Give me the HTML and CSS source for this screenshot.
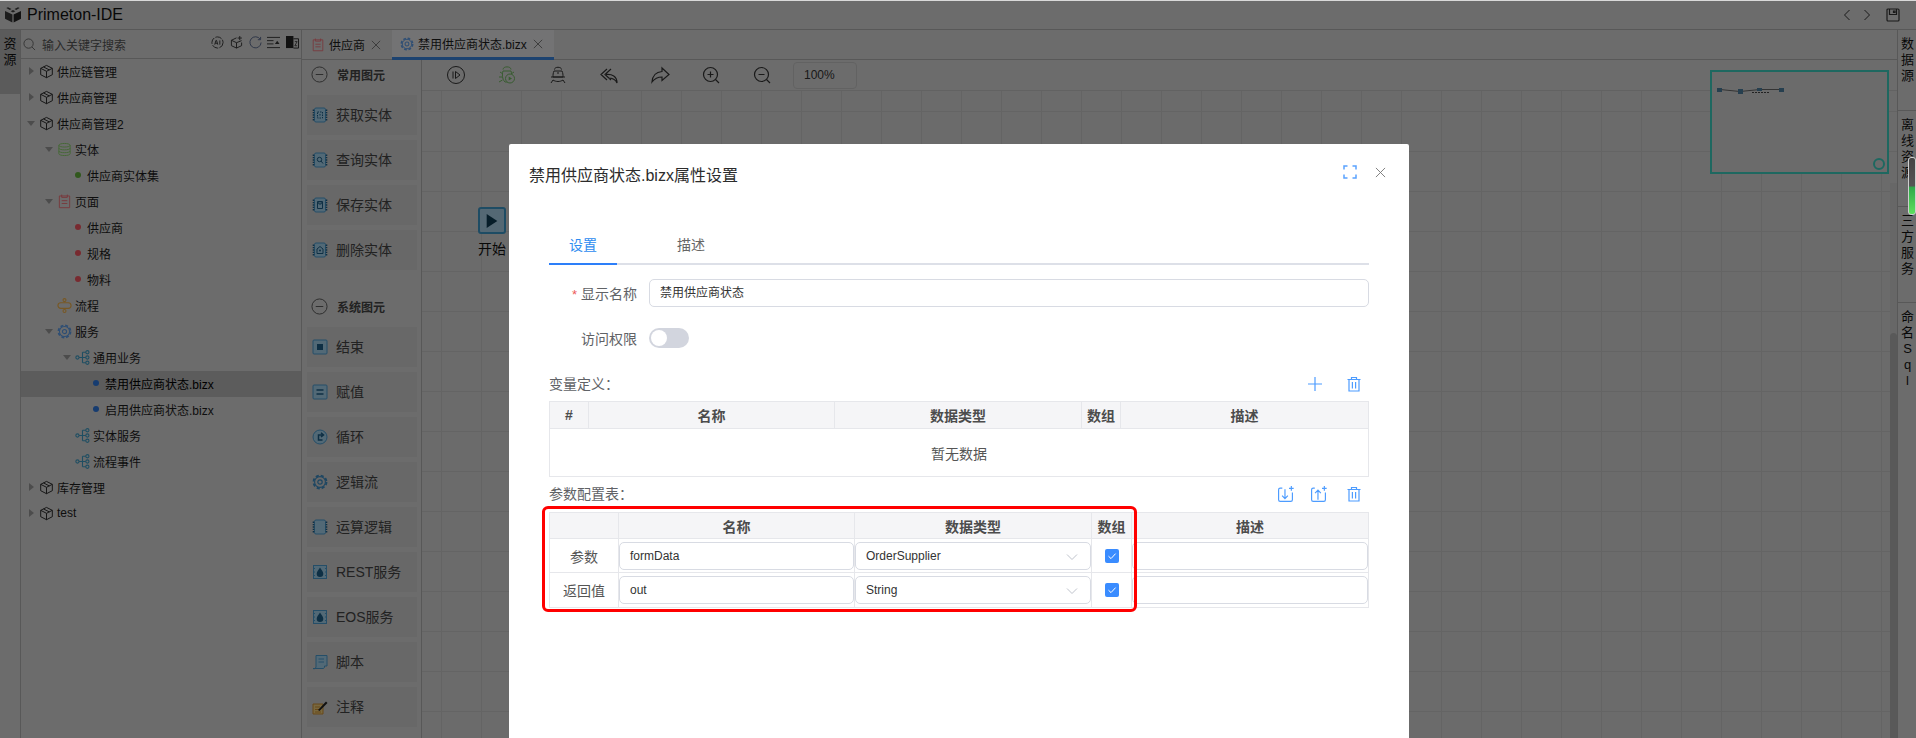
FILE: index.html
```html
<!DOCTYPE html>
<html lang="zh">
<head>
<meta charset="utf-8">
<title>Primeton-IDE</title>
<link rel="stylesheet" href="styles.css">
</head>
<body>
<svg class="sprite" xmlns="http://www.w3.org/2000/svg">
  <symbol id="cube" viewBox="0 0 16 16"><path d="M8 1.5 14.2 4.6V11.4L8 14.6 1.8 11.4V4.6ZM1.8 4.6 8 7.8 14.2 4.6M8 7.8V14.6M4.8 3.1 11 6.3" fill="none" stroke="currentColor"/></symbol>
  <symbol id="flow" viewBox="0 0 16 16"><g fill="none" stroke="currentColor" stroke-width="1.2"><circle cx="2.6" cy="8" r="1.7"/><circle cx="13.2" cy="2.4" r="1.7"/><circle cx="13.2" cy="8" r="1.7"/><circle cx="13.2" cy="13.6" r="1.7"/><path d="M4.3 8H11.5M8 2.4H11.5M8 13.6H11.5M8 2.4V13.6"/></g></symbol>
  <symbol id="gear" viewBox="0 0 16 16"><g fill="none" stroke="currentColor"><circle cx="8" cy="8" r="5.4" stroke-width="1.1"/><circle cx="8" cy="8" r="6.5" stroke-width="1.8" stroke-dasharray="3.1 2"/><circle cx="8" cy="8" r="2.2" stroke-width="1.2"/></g></symbol>
  <symbol id="page" viewBox="0 0 16 16"><path d="M2.5 2.5H13.5V15H2.5ZM5 1V4H11V1M5 7.5H11M5 10.5H11" transform="translate(0 -.4)" fill="none" stroke="currentColor"/></symbol>
  <symbol id="chip" viewBox="0 0 16 16"><rect x="2.5" y="1" width="11" height="14" rx="1.5" fill="#a5d2ec" stroke="#4a9cd0"/><path d="M1.500 2.500V13.500M14.500 2.500V13.500" stroke="#1d5f88" stroke-width="1.600" stroke-dasharray="1.400 1"/></symbol>
  <symbol id="trash" viewBox="0 0 16 16"><path d="M1.500 3.500H14.500M5.500 3.200V1.500H10.500V3.200M3 3.500V15H13V3.500M6.400 6V12.500M9.600 6V12.500" fill="none" stroke="currentColor" stroke-width="1.200"/></symbol>
  <symbol id="cross" viewBox="0 0 12 12"><path d="M1 1 11 11M11 1 1 11" fill="none" stroke="currentColor"/></symbol>
  <symbol id="chevron" viewBox="0 0 12 8"><path d="M1 1.500 6 6.500 11 1.500" fill="none" stroke="currentColor"/></symbol>
  <symbol id="tick" viewBox="0 0 14 14"><path d="M3.500 7.200 6 9.600 10.600 4.600" fill="none" stroke="#fff"/></symbol>
  <symbol id="drop" viewBox="0 0 16 16"><rect x="1.500" y="1.500" width="13" height="13" fill="#a5d2ec" stroke="#4a9cd0"/><path d="M1.500 4.500H3M1.500 8H3M1.500 11.500H3M13 4.500H14.500M13 8H14.500M13 11.500H14.500" stroke="#4a9cd0"/><path d="M8 3.500C9.500 6 11.300 7.600 11.300 9.700A3.300 3.300 0 0 1 4.700 9.700C4.700 7.600 6.500 6 8 3.500Z" fill="#1d5f88"/></symbol>
</svg>

<div class="app">
  <header class="titlebar">
    <svg class="logo" viewBox="0 0 18 17"><path d="M1 5 8.400 8.600V16.500L1 12.800Z" fill="#3a3a3a"/><path d="M17 5 9.600 8.600V16.500L17 12.800Z" fill="#262626"/><path d="M4 1.200 7.500 3 5.800 3.900 2.300 2.100ZM14 1.200 10.500 3 12.200 3.900 15.700 2.100ZM9 4 11.400 5.200 9 6.400 6.600 5.200Z" fill="#3f3f3f"/></svg>
    <span class="app-name">Primeton-IDE</span>
    <div class="title-actions">
      <svg class="nav-icon" viewBox="0 0 8 12"><path d="M6.500 1 1.500 6 6.500 11" fill="none" stroke="currentColor"/></svg>
      <svg class="nav-icon" viewBox="0 0 8 12"><path d="M1.500 1 6.500 6 1.500 11" fill="none" stroke="currentColor"/></svg>
      <svg class="save-icon" viewBox="0 0 14 14"><path d="M1 2A1 1 0 0 1 2 1H12A1 1 0 0 1 13 2V12A1 1 0 0 1 12 13H2A1 1 0 0 1 1 12ZM3.500 1V6.500H10.500V1M7.500 3H9V4.500H7.500Z" fill="none" stroke="currentColor" stroke-width="1.200"/></svg>
    </div>
  </header>

  <div class="main">
    <nav class="rail-left"><div class="rail-tab">资<br>源</div></nav>

    <aside class="tree-panel">
      <div class="search-row">
        <svg class="search-icon" viewBox="0 0 14 14"><circle cx="6" cy="6" r="5" fill="none" stroke="currentColor"/><path d="M9.700 9.700 13 13" stroke="currentColor"/></svg>
        <span class="search-text">输入关键字搜索</span>
        <div class="search-tools">
          <svg class="tool" viewBox="0 0 14 14"><circle cx="7" cy="7" r="6" fill="none" stroke="currentColor" stroke-dasharray="7 1.400"/><path d="M4 9.300 5.300 4.800H6L7.300 9.300M4.500 7.800H6.800M9.500 4.800V9.300" fill="none" stroke="currentColor"/></svg>
          <svg class="tool" viewBox="0 0 14 14"><path d="M7 2 1.500 4.600V10.400L7 13 12.500 10.400V7M1.500 4.600 7 7.200 12.500 5M7 7.200V13M10.500 0V4.500M8.200 2.200H12.800" fill="none" stroke="currentColor"/></svg>
          <svg class="tool tool-refresh" viewBox="0 0 14 14"><path d="M12 3.500A6 6 0 1 0 13 7M12.500 1V4H9.500" fill="none" stroke="currentColor"/></svg>
          <svg class="tool" viewBox="0 0 14 14"><path d="M0 1.500H14M0 5H7M0 8.500H7M0 12.500H14" stroke="currentColor"/><path d="M8.500 8.500 11 5 13.500 8.500Z" fill="currentColor"/></svg>
          <svg class="tool" viewBox="0 0 14 14"><path d="M0 0H8V13H0Z" fill="#222"/><path d="M8 3H13.500V13H8" fill="none" stroke="#222"/><path d="M9.500 6H12L9.500 10.500H12" fill="none" stroke="#222" stroke-width=".8"/></svg>
        </div>
      </div>
      <ul class="tree">
        <li class="row l0"><span class="caret closed"></span><svg class="ico ico-dark"><use href="#cube"/></svg><span>供应链管理</span></li>
        <li class="row l0"><span class="caret closed"></span><svg class="ico ico-dark"><use href="#cube"/></svg><span>供应商管理</span></li>
        <li class="row l0"><span class="caret open"></span><svg class="ico ico-dark"><use href="#cube"/></svg><span>供应商管理2</span></li>
        <li class="row l1"><span class="caret open"></span><svg class="ico ico-green" viewBox="0 0 16 16"><path d="M2 3.500C2 .9 14 .9 14 3.500V12.500C14 15.100 2 15.100 2 12.500ZM2 3.500C2 6 14 6 14 3.500M2 6.600C2 9 14 9 14 6.600M2 9.600C2 12 14 12 14 9.600" fill="none" stroke="currentColor"/></svg><span>实体</span></li>
        <li class="row l2 leaf"><span class="caret"></span><span class="dot dot-green"></span><span>供应商实体集</span></li>
        <li class="row l1"><span class="caret open"></span><svg class="ico ico-red"><use href="#page"/></svg><span>页面</span></li>
        <li class="row l2 leaf"><span class="caret"></span><span class="dot dot-red"></span><span>供应商</span></li>
        <li class="row l2 leaf"><span class="caret"></span><span class="dot dot-red"></span><span>规格</span></li>
        <li class="row l2 leaf"><span class="caret"></span><span class="dot dot-red"></span><span>物料</span></li>
        <li class="row l1"><span class="caret"></span><svg class="ico ico-orange" viewBox="0 0 16 16"><g fill="none" stroke="currentColor" stroke-width="1.200"><rect x="1" y="5" width="14" height="6" rx="3"/><circle cx="8" cy="2.200" r="1.600"/><circle cx="8" cy="13.800" r="1.600"/></g></svg><span>流程</span></li>
        <li class="row l1"><span class="caret open"></span><svg class="ico ico-blue"><use href="#gear"/></svg><span>服务</span></li>
        <li class="row l2"><span class="caret open"></span><svg class="ico ico-teal"><use href="#flow"/></svg><span>通用业务</span></li>
        <li class="row l3 leaf selected"><span class="caret"></span><span class="dot dot-blue"></span><span>禁用供应商状态.bizx</span></li>
        <li class="row l3 leaf"><span class="caret"></span><span class="dot dot-blue"></span><span>启用供应商状态.bizx</span></li>
        <li class="row l2"><span class="caret"></span><svg class="ico ico-teal"><use href="#flow"/></svg><span>实体服务</span></li>
        <li class="row l2"><span class="caret"></span><svg class="ico ico-teal"><use href="#flow"/></svg><span>流程事件</span></li>
        <li class="row l0"><span class="caret closed"></span><svg class="ico ico-dark"><use href="#cube"/></svg><span>库存管理</span></li>
        <li class="row l0"><span class="caret closed"></span><svg class="ico ico-dark"><use href="#cube"/></svg><span>test</span></li>
      </ul>
    </aside>

    <section class="work">
      <div class="doc-tabs">
        <div class="doc-tab doc-tab-first"><svg class="tab-ico ico-red"><use href="#page"/></svg><span>供应商</span><svg class="tab-close"><use href="#cross"/></svg></div>
        <div class="doc-tab doc-tab-active"><svg class="tab-ico ico-blue"><use href="#gear"/></svg><span>禁用供应商状态.bizx</span><svg class="tab-close"><use href="#cross"/></svg></div>
      </div>
      <div class="editor">
        <aside class="palette">
          <div class="pal-head"><svg class="pal-toggle" viewBox="0 0 18 18"><circle cx="9" cy="9" r="8" fill="none" stroke="currentColor"/><path d="M5 9H13" stroke="currentColor"/></svg><b>常用图元</b></div>
          <div class="pal-list">
            <div class="pal-item"><svg class="pal-ico" viewBox="0 0 16 16"><use href="#chip" width="16" height="16"/><path d="M5.500 5H10.500V11H5.500Z M8 7V9" fill="none" stroke="#1d5f88" stroke-dasharray="1.500 1"/></svg><span>获取实体</span></div>
            <div class="pal-item"><svg class="pal-ico" viewBox="0 0 16 16"><use href="#chip" width="16" height="16"/><circle cx="7.500" cy="7.500" r="2.200" fill="none" stroke="#1d5f88"/><path d="M9 9 11 11.500" stroke="#1d5f88"/></svg><span>查询实体</span></div>
            <div class="pal-item"><svg class="pal-ico" viewBox="0 0 16 16"><use href="#chip" width="16" height="16"/><path d="M5.500 4.500H10.500V11.500H5.500ZM6.800 4.500V7H9.200V4.500" fill="none" stroke="#1d5f88"/></svg><span>保存实体</span></div>
            <div class="pal-item"><svg class="pal-ico" viewBox="0 0 16 16"><use href="#chip" width="16" height="16"/><path d="M5 7 8 4.500 11 7V11.500H5Z" fill="none" stroke="#1d5f88"/><circle cx="8" cy="8.500" r="1" fill="#1d5f88"/></svg><span>删除实体</span></div>
          </div>
          <div class="pal-head pal-head-second"><svg class="pal-toggle" viewBox="0 0 18 18"><circle cx="9" cy="9" r="8" fill="none" stroke="currentColor"/><path d="M5 9H13" stroke="currentColor"/></svg><b>系统图元</b></div>
          <div class="pal-list">
            <div class="pal-item"><svg class="pal-ico" viewBox="0 0 16 16"><rect x="1" y="1" width="14" height="14" rx="1" fill="#a5d2ec" stroke="#4a9cd0"/><rect x="5" y="5" width="6" height="6" fill="#1d5f88"/></svg><span>结束</span></div>
            <div class="pal-item"><svg class="pal-ico" viewBox="0 0 16 16"><rect x="1" y="1" width="14" height="14" rx="1" fill="#a5d2ec" stroke="#4a9cd0"/><path d="M4.500 6H11.500M4.500 10H11.500" stroke="#1d5f88" stroke-width="1.600"/></svg><span>赋值</span></div>
            <div class="pal-item"><svg class="pal-ico" viewBox="0 0 16 16"><circle cx="8" cy="8" r="7" fill="#a5d2ec" stroke="#4a9cd0"/><path d="M10.500 6H6.500V11H10.500M9 3.800 11.500 6 9 8" fill="none" stroke="#1d5f88" stroke-width="1.500"/></svg><span>循环</span></div>
            <div class="pal-item"><svg class="pal-ico pal-gear"><use href="#gear"/></svg><span>逻辑流</span></div>
            <div class="pal-item"><svg class="pal-ico"><use href="#chip"/></svg><span>运算逻辑</span></div>
            <div class="pal-item"><svg class="pal-ico"><use href="#drop"/></svg><span>REST服务</span></div>
            <div class="pal-item"><svg class="pal-ico"><use href="#drop"/></svg><span>EOS服务</span></div>
            <div class="pal-item"><svg class="pal-ico" viewBox="0 0 16 16"><path d="M4 1.500H15V12M4 1.500V13A2 2 0 0 1 1 14.500H11.500A2 2 0 0 0 12.500 13V12H15M6.500 5H12M6.500 8H12" fill="#a5d2ec" stroke="#4a9cd0"/></svg><span>脚本</span></div>
            <div class="pal-item"><svg class="pal-ico" viewBox="0 0 16 16"><path d="M1 5H11V15H1ZM3 8H8M3 10.500H7M3 13H9" fill="#f0d080" stroke="#d09030"/><path d="M6 11 14 2.500 15.500 4 7.500 12Z" fill="#222"/></svg><span>注释</span></div>
          </div>
        </aside>
        <div class="stage">
          <div class="toolbar">
            <svg class="tb-ico" viewBox="0 0 20 20"><circle cx="10" cy="10" r="8.500" fill="none" stroke="currentColor"/><path d="M7 6.500V13.500M9.500 6.500 14 10 9.500 13.500Z" fill="none" stroke="currentColor"/></svg>
            <svg class="tb-ico tb-green" viewBox="0 0 20 20"><path d="M6 4.500C6 1 14 1 14 4.500M3 7 6 9M17 7 14 9M2 12H5.500M2 17 5.500 15M6 6H14C15 9 15 14 12 17H8C5 14 5 9 6 6Z" fill="none" stroke="currentColor"/><circle cx="13" cy="13.500" r="4.500" fill="#d9d9d9" stroke="currentColor"/><path d="M11.700 11.500V15.500L15 13.500Z" fill="currentColor"/></svg>
            <svg class="tb-ico" viewBox="0 0 20 20"><path d="M6.500 4.500C6.500 1.500 13.500 1.500 13.500 4.500M6 6H14C15 8 15 10 15 12H5C5 10 5 8 6 6ZM3 12H17M3 18 5 15C8 17 12 17 15 15L17 18M10 7V9" fill="none" stroke="currentColor"/></svg>
            <svg class="tb-ico" viewBox="0 0 20 20"><path d="M8 4 2 9.500 8 15M12 4 6 9.500 12 15M7 9.500C13 9 18 11 18 18 16 13 12 13 9 13" fill="none" stroke="currentColor" stroke-width="1.200"/></svg>
            <svg class="tb-ico" viewBox="0 0 20 20"><path d="M12 3 19 9.500 12 15.500V12C8 12 5 13 2 17 2.500 11 6 7 12 6.500Z" fill="none" stroke="currentColor" stroke-width="1.200"/></svg>
            <svg class="tb-ico" viewBox="0 0 20 20"><circle cx="9.500" cy="9.500" r="7" fill="none" stroke="currentColor" stroke-width="1.200"/><path d="M14.500 14.500 18 18M6.500 9.500H12.500M9.500 6.500V12.500" fill="none" stroke="currentColor" stroke-width="1.200"/></svg>
            <svg class="tb-ico" viewBox="0 0 20 20"><circle cx="9.500" cy="9.500" r="7" fill="none" stroke="currentColor" stroke-width="1.200"/><path d="M14.500 14.500 18 18M6.500 9.500H12.500" fill="none" stroke="currentColor" stroke-width="1.200"/></svg>
            <div class="zoom-box">100%</div>
          </div>
          <div class="canvas">
            <div class="start-node"><div class="start-box"><svg class="start-play" viewBox="0 0 14 18"><path d="M1 1 13 9 1 17Z" fill="#0d3a52"/></svg></div><span>开始</span></div>
            <div class="minimap">
              <svg class="mini-flow" viewBox="0 0 70 8"><path d="M3 2.500 23 4.500 43 2.500 65 2.500" stroke="#666" fill="none"/><path d="M0 1H5V5H0ZM21 2H26V7H21ZM40 1H45V4H40ZM62 1H67V5H62Z" fill="#4d7f9e"/><path d="M35 5.500H53" stroke="#444" stroke-dasharray="2 1"/></svg>
              <span class="mini-handle"></span>
            </div>
          </div>
          <div class="vscroll"><span class="vthumb"></span></div>
        </div>
      </div>
    </section>

    <nav class="rail-right">
      <div class="rr-tab rr-first">数<br>据<br>源</div>
      <div class="rr-tab">离<br>线<br>资<br>源</div>
      <div class="rr-tab">三<br>方<br>服<br>务</div>
      <div class="rr-tab rr-sql">命<br>名<br>S<br>q<br>l</div>
    </nav>
  </div>
</div>

<div class="mask"></div>
<div class="gauge"></div>

<div class="modal">
  <div class="modal-head">
    <h2 class="modal-title">禁用供应商状态.bizx属性设置</h2>
    <svg class="m-full" viewBox="0 0 14 14"><path d="M1 4.500V1H4.500M9.500 1H13V4.500M13 9.500V13H9.500M4.500 13H1V9.500" fill="none" stroke="currentColor" stroke-width="1.500"/></svg>
    <svg class="m-close"><use href="#cross"/></svg>
  </div>
  <div class="modal-body">
    <div class="tabs">
      <div class="tab tab-active">设置</div>
      <div class="tab">描述</div>
    </div>
    <div class="form-row form-name">
      <label class="form-label"><i class="req">*</i>显示名称</label>
      <div class="field field-grow">禁用供应商状态</div>
    </div>
    <div class="form-row form-switch">
      <label class="form-label">访问权限</label>
      <span class="switch"><span class="knob"></span></span>
    </div>

    <div class="sec-head sec-first">
      <span class="sec-label">变量定义：</span>
      <div class="sec-actions">
        <svg class="act act-plus" viewBox="0 0 16 16"><path d="M8 1V15M1 8H15" stroke="currentColor" stroke-width="1.200"/></svg>
        <svg class="act"><use href="#trash"/></svg>
      </div>
    </div>
    <table class="grid grid-a">
      <colgroup><col class="a1"><col class="a2"><col class="a3"><col class="a4"><col></colgroup>
      <thead><tr><th>#</th><th>名称</th><th>数据类型</th><th>数组</th><th>描述</th></tr></thead>
      <tbody><tr><td colspan="5" class="empty">暂无数据</td></tr></tbody>
    </table>

    <div class="sec-head sec-second">
      <span class="sec-label">参数配置表：</span>
      <div class="sec-actions sec-actions-b">
        <svg class="act act-lg act-import" viewBox="0 0 16 16"><path d="M5 2H3A1.500 1.500 0 0 0 1.500 3.500V13A1.500 1.500 0 0 0 3 14.500H13A1.500 1.500 0 0 0 14.500 13V6M7.500 3V11.500M4.800 9 7.500 11.800 10.200 9M13.500 0V4.500M11.300 2.200H15.700" fill="none" stroke="currentColor" stroke-width="1.100"/></svg>
        <svg class="act act-lg act-export" viewBox="0 0 16 16"><path d="M4.500 2H3A1.500 1.500 0 0 0 1.500 3.500V13A1.500 1.500 0 0 0 3 14.500H13A1.500 1.500 0 0 0 14.500 13V6M7.500 13V4M4.800 6.700 7.500 3.800 10.200 6.700M13.500 0V4.500M11.300 2.200H15.700" fill="none" stroke="currentColor" stroke-width="1.100"/></svg>
        <svg class="act"><use href="#trash"/></svg>
      </div>
    </div>
    <div class="grid-wrap">
      <table class="grid grid-b">
        <colgroup><col class="b1"><col class="b2"><col class="b3"><col class="b4"><col></colgroup>
        <thead><tr><th></th><th>名称</th><th>数据类型</th><th>数组</th><th>描述</th></tr></thead>
        <tbody>
          <tr class="r1">
            <td>参数</td>
            <td class="cell-f"><div class="field">formData</div></td>
            <td class="cell-f"><div class="field field-select">OrderSupplier<svg class="chev"><use href="#chevron"/></svg></div></td>
            <td><span class="check"><svg><use href="#tick"/></svg></span></td>
            <td class="cell-f"><div class="field"></div></td>
          </tr>
          <tr class="r2">
            <td>返回值</td>
            <td class="cell-f"><div class="field">out</div></td>
            <td class="cell-f"><div class="field field-select">String<svg class="chev"><use href="#chevron"/></svg></div></td>
            <td><span class="check"><svg><use href="#tick"/></svg></span></td>
            <td class="cell-f"><div class="field"></div></td>
          </tr>
        </tbody>
      </table>
      <div class="highlight"></div>
    </div>
  </div>
</div>
</body>
</html>
```

FILE: styles.css
```css
* { box-sizing: border-box; }
html, body { margin: 0; height: 100%; overflow: hidden; }
body {
  font-family: "Liberation Sans", "Noto Sans CJK SC", sans-serif;
  font-size: 12px;
  color: #222;
  background: #d9d9d9;
}
ul { list-style: none; margin: 0; padding: 0; }
svg { display: block; flex: none; }
.sprite { display: none; }

.app { height: 738px; display: flex; flex-direction: column; }

/* title bar */
.titlebar {
  height: 30px; flex: none;
  display: flex; align-items: center;
  padding: 0 16px 0 4px;
  border-bottom: 1px solid #b0b0b0;
}
.logo { width: 18px; height: 17px; margin-right: 5px; }
.app-name { font-size: 16px; color: #111; }
.title-actions { margin-left: auto; display: flex; align-items: center; color: #333; }
.nav-icon { width: 8px; height: 12px; margin-right: 12px; }
.save-icon { width: 14px; height: 14px; margin-left: 3px; }

.main { flex: 1; display: flex; min-height: 0; }

/* left rail */
.rail-left { width: 21px; flex: none; border-right: 1px solid #b0b0b0; }
.rail-tab {
  height: 64px; background: #b6b6b6;
  padding-top: 6px; text-align: center;
  font-size: 13px; line-height: 16px; color: #111;
}

/* tree */
.tree-panel { width: 281px; flex: none; border-right: 1px solid #b0b0b0; display: flex; flex-direction: column; }
.search-row {
  height: 29px; flex: none;
  display: flex; align-items: center;
  padding: 0 2px 0 2px;
  border-bottom: 1px solid #b0b0b0;
  color: #666;
}
.search-icon { width: 13px; height: 13px; margin: 1px 6px 0 0; }
.search-text { font-size: 12px; color: #555; }
.search-tools { margin-left: auto; display: flex; gap: 5.750px; color: #333; margin-bottom: 4px; }
.tool { width: 13px; height: 13px; }
.tool-refresh { color: #55668a; }

.row { height: 26px; display: flex; align-items: center; color: #1c1c1c; padding-bottom: 2px; }
.l0 { padding-left: 3px; }
.l1 { padding-left: 21px; }
.l2 { padding-left: 39px; }
.l3 { padding-left: 57px; }
.selected { background: #b8b8b8; color: #000; }
.caret { width: 14px; flex: none; display: flex; justify-content: center; }
.caret.closed::before {
  content: ""; border-left: 5px solid #999; border-top: 4px solid transparent; border-bottom: 4px solid transparent;
}
.caret.open::before {
  content: ""; border-top: 5px solid #999; border-left: 4px solid transparent; border-right: 4px solid transparent;
}
.ico { width: 15px; height: 15px; margin-right: 3px; margin-left: 1px; }
.ico-dark { color: #222; }
.ico-green { color: #88d068; }
.ico-red { color: #f07078; }
.ico-orange { color: #f0b048; }
.ico-blue { color: #5c9ce8; }
.ico-teal { color: #3f9cc4; }
.dot { width: 6px; height: 6px; border-radius: 50%; margin: 0 6px 0 1px; flex: none; }
.dot-green { background: #62b03a; }
.dot-red { background: #f05560; }
.dot-blue { background: #2d78e0; }

/* work area */
.work { flex: 1; min-width: 0; display: flex; flex-direction: column; }
.doc-tabs { height: 30px; flex: none; display: flex; border-bottom: 1px solid #b0b0b0; }
.doc-tab { display: flex; align-items: center; height: 29px; color: #1c1c1c; }
.doc-tab-first { width: 90px; padding-left: 9px; }
.doc-tab-active { width: 162px; padding-left: 8px; background: #e6e6e8; border-bottom: 3px solid #3a86e0; margin-bottom: -1px; height: 30px; }
.tab-ico { width: 14px; height: 14px; margin-right: 4px; }
.tab-close { width: 10px; height: 10px; margin-left: 6px; color: #666; }

.editor { flex: 1; display: flex; min-height: 0; }
.palette { width: 120px; flex: none; border-right: 1px solid #b0b0b0; overflow: hidden; }
.pal-head { height: 35px; padding: 0 0 7px 9px; display: flex; align-items: center; color: #333; }
.pal-head b { margin-left: 9px; font-size: 12px; color: #444; }
.pal-head-second { height: 52px; padding: 10px 0 0 9px; }
.pal-toggle { width: 17px; height: 17px; color: #555; }
.pal-list { display: flex; flex-direction: column; gap: 5px; margin-left: 5px; margin-bottom: 5px; }
.pal-item {
  width: 110px; height: 40px; flex: none;
  background: #d0d0d0;
  display: flex; align-items: center;
  padding: 0 0 2px 5px;
  font-size: 14px; color: #444;
}
.pal-ico { width: 16px; height: 16px; margin-right: 8px; margin-top: 2px; }
.pal-gear { color: #3a8cc4; }

.stage { flex: 1; min-width: 0; position: relative; display: flex; flex-direction: column; }
.toolbar {
  height: 31px; flex: none;
  display: flex; align-items: center;
  gap: 31px;
  padding-left: 24px;
  border-bottom: 1px solid #c4c4c4;
  color: #333;
}
.tb-ico { width: 20px; height: 20px; }
.tb-green { color: #70b860; }
.zoom-box {
  width: 64px; height: 27px; margin-left: -10px;
  border: 1px solid #c4c4c4; border-radius: 4px;
  padding-left: 10px; line-height: 24px; font-size: 12px; color: #333;
}
.canvas {
  flex: 1;
  position: relative;
  background-color: #d7d7d7;
  background-image:
    linear-gradient(#c8c8c8 1px, transparent 1px),
    linear-gradient(90deg, #c8c8c8 1px, transparent 1px);
  background-size: 40px 40px;
  background-position: 19px 20px;
}
.start-node { position: absolute; left: 55px; top: 116px; width: 30px; text-align: center; font-size: 14px; color: #111; }
.start-box {
  width: 28px; height: 27px; margin: 0 auto 4px;
  background: #a8d0e8; border: 2px solid #3d98c8; border-radius: 3px;
  display: flex; align-items: center; justify-content: center;
}
.start-play { width: 14px; height: 16px; }
.start-node span { white-space: nowrap; }
.minimap {
  position: absolute; right: 8px; top: -21px;
  width: 179px; height: 104px;
  border: 2px solid #3cd0c0;
  background: #d7d7d7;
}
.mini-flow { position: absolute; left: 5px; top: 15px; width: 70px; height: 8px; }
.mini-handle {
  position: absolute; right: 2px; bottom: 2px;
  width: 12px; height: 12px; border: 2px solid #3cd0c0; border-radius: 50%;
}
.vscroll { position: absolute; right: 0; top: 123px; bottom: 0; width: 7px; background: #cfcfcf; }
.vthumb { position: absolute; left: 0; top: 150px; bottom: 0; width: 7px; background: #b2b2b2; border-radius: 4px 4px 0 0; }

/* right rail */
.rail-right { width: 19px; flex: none; border-left: 1px solid #b0b0b0; }
.rr-tab {
  padding: 6px 0 25px 1px;
  border-bottom: 1px solid #b0b0b0;
  text-align: center; font-size: 13px; line-height: 16px; color: #111;
}
.rr-first { padding-bottom: 26px; }
.rr-sql { border-bottom: 0; }

/* overlay layers */
.mask { position: fixed; left: 0; right: 0; top: 1px; bottom: 0; background: rgba(0, 0, 0, .5); z-index: 10; }
.gauge {
  position: fixed; right: 0; top: 157px; width: 8px; height: 58px; z-index: 11;
  border: 1px solid #cfcfcf; border-radius: 3px;
  background: linear-gradient(#444 0, #555 50%, #2fa84a 52%, #5ee05e 100%);
}

/* modal */
.modal {
  position: fixed; left: 509px; top: 144px; bottom: 0; width: 900px;
  background: #fff; border-radius: 2px 2px 0 0; z-index: 20;
  color: #333;
}
.modal-head { height: 62px; padding: 0 23px 0 20px; display: flex; align-items: center; }
.modal-title { margin: 0 auto 2px 0; font-size: 16px; font-weight: 400; color: #2c2c2c; }
.m-full { width: 14px; height: 14px; color: #5aa2ff; margin: -6px 18px 0 0; }
.m-close { width: 11px; height: 11px; color: #777; margin-top: -6px; }
.modal-body { padding: 0 40px; }

.tabs { height: 59px; display: flex; align-items: flex-end; gap: 40px; border-bottom: 2px solid #dde0e8; }
.tab { height: 40px; margin-bottom: -2px; padding: 0 20px; font-size: 14px; line-height: 40px; color: #666; }
.tab-active { color: #2d8cf0; border-bottom: 2px solid #2d7ff9; }

.form-row { display: flex; align-items: center; gap: 12px; }
.form-name { margin-top: 14px; }
.form-switch { margin-top: 21px; height: 20px; }
.form-label { width: 88px; text-align: right; font-size: 14px; color: #606266; flex: none; }
.req { font-style: normal; color: #ed5a5a; margin-right: 4px; font-size: 13px; }
.field {
  height: 28px; border: 1px solid #d8dbe3; border-radius: 5px;
  padding-left: 10px; line-height: 27px; font-size: 12px; color: #333; background: #fff;
}
.field-grow { flex: 1; }
.field-select { position: relative; }
.chev { position: absolute; right: 12px; top: 10px; width: 12px; height: 8px; color: #bfc3cc; }
.switch { width: 40px; height: 20px; border-radius: 10px; background: #d2d5de; padding: 2px; }
.knob { display: block; width: 16px; height: 16px; border-radius: 50%; background: #fff; }

.sec-head {
  height: 30px; margin-bottom: 2px;
  display: flex; align-items: center; justify-content: space-between;
  font-size: 14px; color: #606266;
}
.sec-label { margin-top: -2px; }
.sec-first { margin-top: 21px; }
.sec-second { margin-top: 2px; margin-bottom: 3px; }
.sec-actions { display: flex; align-items: center; gap: 23px; padding-right: 7px; color: #4d9cff; }
.sec-actions-b { gap: 0; }
.act { width: 16px; height: 16px; }
.act-lg { width: 17px; height: 17px; }
.act-import { margin-right: 16px; }
.act-export { margin-right: 19px; }

.grid { width: 820px; border-collapse: collapse; table-layout: fixed; background: #fff; }
.grid th, .grid td { border: 1px solid #e6e7eb; padding: 0; text-align: center; font-size: 14px; color: #555; }
.grid th { background: #f5f5f7; font-weight: 700; color: #4c4c4c; }
.a1 { width: 39px; }
.a2 { width: 246px; }
.a3 { width: 247px; }
.a4 { width: 39px; }
.grid-a th { height: 27px; }
.empty { height: 48px; }
.b1 { width: 69px; }
.b2 { width: 236px; }
.b3 { width: 237px; }
.b4 { width: 40px; }
.grid-b th { height: 26px; }
.grid-b .r1 td { height: 34px; }
.grid-b .r2 td { height: 35px; }
.grid td.cell-f { text-align: left; padding: 0; }
.grid .field { font-size: 12px; padding-left: 10px; }
.check { display: block; width: 14px; height: 14px; margin: 0 auto; background: #3a8cff; border-radius: 2px; }
.check svg { width: 14px; height: 14px; }

.grid-wrap { position: relative; }
.highlight {
  position: absolute; left: -7px; top: -6px; width: 595px; height: 106px;
  border: 3px solid #f00; border-radius: 6px;
}
```
